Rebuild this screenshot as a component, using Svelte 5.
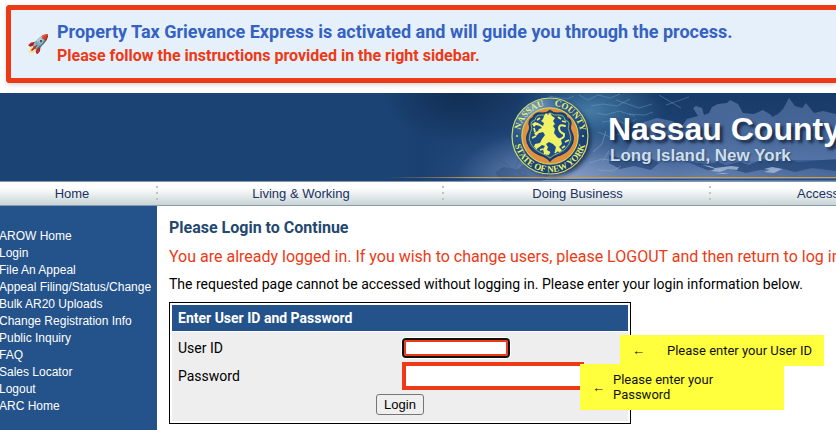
<script>
  const navItems = ['Home', 'Living & Working', 'Doing Business', 'Access'];

  const menu = [
    'AROW Home',
    'Login',
    'File An Appeal',
    'Appeal Filing/Status/Change',
    'Bulk AR20 Uploads',
    'Change Registration Info',
    'Public Inquiry',
    'FAQ',
    'Sales Locator',
    'Logout',
    'ARC Home',
  ];

  let userId = $state('');
  let password = $state('');
</script>

<div class="page">
  <div class="notice">
    <span class="rocket">🚀</span>
    <div>
      <p class="notice-title">Property Tax Grievance Express is activated and will guide you through the process.</p>
      <p class="notice-sub">Please follow the instructions provided in the right sidebar.</p>
    </div>
  </div>

  <header class="banner">
    <svg class="art" viewBox="0 0 460 88" preserveAspectRatio="xMinYMin slice" aria-hidden="true">
      <defs>
        <linearGradient id="sky" x1="0" x2="0" y1="0" y2="1">
          <stop offset="0" stop-color="#183a67" />
          <stop offset="0.45" stop-color="#1d4273" />
          <stop offset="0.8" stop-color="#3d6096" />
          <stop offset="1" stop-color="#50709f" />
        </linearGradient>
        <linearGradient id="fade" x1="0" x2="1" y1="0" y2="0">
          <stop offset="0" stop-color="#1b4474" />
          <stop offset="0.1" stop-color="#1a4071" />
          <stop offset="0.3" stop-color="#1c4274" stop-opacity="0.5" />
          <stop offset="0.4" stop-color="#1c4274" stop-opacity="0" />
        </linearGradient>
        <radialGradient id="haze" cx="0.5" cy="0.5" r="0.5">
          <stop offset="0" stop-color="#9aaed2" stop-opacity="0.8" />
          <stop offset="1" stop-color="#7c99c3" stop-opacity="0" />
        </radialGradient>
        <radialGradient id="sea" cx="0.5" cy="0.5" r="0.5">
          <stop offset="0" stop-color="#4a82ac" stop-opacity="0.9" />
          <stop offset="1" stop-color="#3f77a4" stop-opacity="0" />
        </radialGradient>
        <radialGradient id="shade" cx="0.5" cy="0.5" r="0.5">
          <stop offset="0" stop-color="#102a4c" stop-opacity="0.85" />
          <stop offset="1" stop-color="#102a4c" stop-opacity="0" />
        </radialGradient>
        <linearGradient id="gold" x1="0" x2="1" y1="0" y2="0">
          <stop offset="0" stop-color="#c9994b" stop-opacity="0" />
          <stop offset="0.2" stop-color="#c9994b" />
          <stop offset="1" stop-color="#d69c42" />
        </linearGradient>
        <filter id="soft"><feGaussianBlur stdDeviation="2" /></filter>
      </defs>
      <rect width="460" height="88" fill="url(#sky)" />
      <rect width="460" height="88" fill="url(#fade)" />
      <ellipse cx="84" cy="0" rx="76" ry="50" fill="url(#shade)" />
      <ellipse cx="215" cy="18" rx="75" ry="42" fill="url(#sea)" />
      <ellipse cx="190" cy="84" rx="110" ry="50" fill="url(#haze)" />
      <ellipse cx="330" cy="84" rx="140" ry="36" fill="url(#haze)" opacity="0.4" />
      <g fill="#6583b4" opacity="0.6">
        <path d="M246 66l8-14 5-14 9-9 13-4 15 3 10 5 5-7 11-3-5-8 3-2 6 2 2 7 5-2 3-6 6-3 9-1 3-3 8 4 5 9 11 1 9-4 8 5 9 14-4 10 6 18 6 5z" />
        <path d="M402 21l5-5 6-11 6 8 7 2 4-5 8 10 9-2 13 3v46h-56l-8-6 2-20-8-9 6-8z" opacity="0.9" />
        <path d="M360 36l20-6 18 4 10 14 52-5v24H364z" opacity="0.7" />
      </g>
      <g fill="#1d3f6e" opacity="0.6">
        <path d="M302 65l12 4 17 2 11-2 8 3 14-3 9 3 14-6 12 2 10-3 13 4 38-3v12l-24-3-17 4-11-3-24 1-14 3-16-4-23 1z" />
        <path d="M233 62l11 3 12-1 8 4 10-3 9 5-8 7-17-4-14 3-11-6z" />
        <path d="M119 80l8-6 15 2 7-6 9 4 10-1 6 9-8 6h-40z" opacity="0.5" />
      </g>
      <path d="M326 72l8 1 5 2 16-2 8 1-2 3-9-1-8 3-9-1 4-2zM388 76l8-2 11 2-3 1-6 3-10-1 6-2zM338 80l16 0-7 1z" fill="#a9bbd9" opacity="0.8" />
      <g fill="none" stroke="#91aacb" stroke-width="0.8" opacity="0.6">
        <path d="M213 70l13-4 14 2 10-5M222 77l15 1 8-5M217 59l9-8 4-13M226 69l7-11" />
      </g>
      <g fill="none" stroke="#79a9c8" stroke-width="0.6" opacity="0.65">
        <path d="M203 2l9 5 10-5 12 3 10-4M215 13l12-2 14 2 13-7M221 20l9 2 13-4 16 5M226 29l15-2 10 5 9-6M222 39l12 5 17-5M240 7l23 8 13-4M253 21l16 1 8-3M173 3l18 3 7-3M283 2l22 13M290 12l23-8" />
      </g>
      <g fill="none" stroke="#3d5f92" stroke-width="1" opacity="0.7">
        <path d="M120 66l9 4 6 6M135 60l8 8-4 7M143 80q5-6 7 0t-7 0M154 68l10 3 9 9" />
      </g>
      <rect x="10" y="84" width="450" height="1" fill="url(#gold)" />
      <rect x="40" y="86" width="420" height="1" fill="#1c426f" opacity="0.8" />
      <circle cx="178" cy="46" r="37" fill="#0b203c" opacity="0.75" filter="url(#soft)" />
    </svg>

    <div class="brand">
      <svg class="seal" viewBox="0 0 80 80" role="img" aria-label="Nassau County seal">
        <defs>
          <path id="arc-top" d="M9.5 40a30.5 30.5 0 0 1 61 0" />
          <path id="arc-bottom" d="M3.8 40a36.2 36.2 0 0 0 72.4 0" />
          <radialGradient id="disc" cx="0.3" cy="0.15" r="0.75">
            <stop offset="0" stop-color="#7fa3c4" />
            <stop offset="0.5" stop-color="#2d5b8e" />
            <stop offset="1" stop-color="#1a4077" />
          </radialGradient>
        </defs>
        <circle cx="40" cy="40" r="38" fill="url(#disc)" stroke="#cfdc6c" stroke-width="1.2" />
        <circle cx="40" cy="40" r="28.2" fill="#e0913f" stroke="#d7e267" stroke-width="1" />
        <path d="M40 14.500Q44 18 50 17Q56 17 57 22Q61 23 61 28Q59 32 62 37Q65 43 61 50Q58 56 50 59Q43 61 40 65Q37 61 30 59Q22 56 19 50Q15 43 18 37Q21 32 19 28Q19 23 23 22Q24 17 30 17Q36 18 40 14.500z" fill="#1e4d85" stroke="#163a68" stroke-width="1.4" />
        <path d="M40 17Q44 20 49 19Q54 19 55 24Q59 25 59 28Q57 32 60 38Q62 43 59 48Q56 54 49 57Q43 59 40 62Q37 59 31 57Q24 54 21 48Q18 43 20 38Q23 32 21 28Q21 25 25 24Q26 19 31 19Q36 20 40 17z" fill="none" stroke="#b4c46b" stroke-width="0.8" />
        <path d="M34 20l2-3 2 2 2-2 2 3 3 2-2 3 2 3-2 2 2 3-1 4 3 4 4 3 1 4-3 3 3 3-2 2-5-1 1-4-3-3-4-2-3 2 2 3-1 3 3 2-1 3-5-1-1-5 2-3-3-1-4 3-4-1 1-3 5-1 2-4 3-4-2-3-4 1-3 3-2-3 4-2 1-2 3-1-2-2-4-1-2 2-2-3 3-2 3 1 5 3 1-3-3-2 2-2z" fill="#f0f266" />
        <path d="M46 44Q55 43 54 38Q49 36 49 32Q49 28 55 30" fill="none" stroke="#f0f266" stroke-width="2" stroke-linecap="round" />
        <g stroke="#e6ec6b" stroke-width="1.8">
          <path d="M27 24l3-2M48 21l3 2M24 32l1 4M52 25l4 1M22 42l4-2M55 46l4-2M25 50l2 3M52 52l3-2M36 58l4-2M30 54l3-1M45 57l2-3" />
        </g>
        <g class="seal-text">
          <text><textPath href="#arc-top" startOffset="6">NASSAU</textPath></text>
          <text><textPath href="#arc-top" startOffset="52">COUNTY</textPath></text>
          <text text-anchor="middle"><textPath href="#arc-bottom" startOffset="50%">STATE OF NEW YORK</textPath></text>
        </g>
        <circle cx="7" cy="40" r="1" fill="#e1e96b" />
        <circle cx="73" cy="40" r="1" fill="#e1e96b" />
      </svg>
      <div class="brand-text">
        <span class="brand-name">Nassau County</span>
        <span class="brand-place">Long Island, New York</span>
      </div>
    </div>
  </header>

  <nav class="topnav">
    {#each navItems as item}
      <a href="#top">{item}</a>
    {/each}
  </nav>

  <div class="columns">
    <aside class="sidebar">
      {#each menu as item}
        <a href="#menu">{item}</a>
      {/each}
    </aside>

    <main>
      <h1>Please Login to Continue</h1>
      <p class="warning">You are already logged in. If you wish to change users, please LOGOUT and then return to log in</p>
      <p class="info">The requested page cannot be accessed without logging in. Please enter your login information below.</p>

      <form class="login" onsubmit={(e) => e.preventDefault()}>
        <h2>Enter User ID and Password</h2>
        <div class="fields">
          <div class="field">
            <label for="user">User ID</label>
            <input id="user" class="user" type="text" bind:value={userId} />
            <div class="tip tip-user"><span class="arrow">←</span><span>Please enter your User ID</span></div>
          </div>
          <div class="field">
            <label for="password">Password</label>
            <input id="password" class="password" type="password" bind:value={password} />
            <div class="tip tip-password"><span class="arrow">←</span><span>Please enter your Password</span></div>
          </div>
          <button type="submit">Login</button>
        </div>
      </form>
    </main>
  </div>
</div>

<style>
  :global(body) { background: #fff; }
  .page {
    min-height: 100vh;
    display: flex;
    flex-direction: column;
    overflow: hidden;
    font-family: Roboto, sans-serif;
    color: #000;
  }
  p, h1, h2 { margin: 0; }
  a { text-decoration: none; }

  .notice {
    display: flex;
    align-items: center;
    gap: 8px;
    margin: 5px 0 10px 6px;
    padding: 10px 16px;
    border: 5px solid #ed3915;
    border-right: 0;
    border-radius: 4px 0 0 4px;
    background: #e6f0fb;
    box-shadow: 0 2px 4px rgba(0, 0, 0, 0.15);
    font-weight: 700;
    white-space: nowrap;
  }
  .rocket { width: 22px; font-size: 18px; line-height: 22px; }
  .notice-title { font-size: 18px; line-height: 24px; color: #3462c2; }
  .notice-sub { font-size: 16px; line-height: 24px; color: #ed3915; }

  .banner {
    position: relative;
    height: 88px;
    background: #1b4474;
    overflow: hidden;
  }
  .art {
    position: absolute;
    top: 0;
    left: 376px;
    width: calc(100% - 376px);
    height: 88px;
  }
  .brand {
    position: relative;
    display: flex;
    gap: 18px;
    margin-left: 510px;
    padding-top: 3px;
  }
  .seal { width: 80px; height: 80px; flex: none; }
  .seal-text { font: bold 9px "Liberation Serif", serif; fill: #eaf06c; }
  .brand-text {
    display: flex;
    flex-direction: column;
    padding-top: 16px;
    font-family: "Liberation Sans", Arial, sans-serif;
    font-weight: bold;
    white-space: nowrap;
  }
  .brand-name { font-size: 32px; line-height: 34px; color: #fff; text-shadow: 3px 3px 3px rgba(12, 30, 58, 0.8); }
  .brand-place { padding-left: 2px; font-size: 17px; line-height: 20px; color: #cddfeb; text-shadow: 1px 1px 2px rgba(12, 30, 58, 0.5); }

  .topnav {
    display: grid;
    grid-template-columns: 158px 286px 267px 1fr;
    border-top: 1px solid #8497ac;
    border-bottom: 1px solid #8a99ab;
    background: linear-gradient(#fff 25%, #c8d4d5);
  }
  .topnav a {
    position: relative;
    font: 13px/23px "Liberation Sans", Arial, sans-serif;
    text-align: center;
    color: #1c3164;
  }
  .topnav a:first-child { padding-right: 14px; }
  .topnav a:last-child { padding-left: 86px; text-align: left; }
  .topnav a:not(:last-child)::after {
    content: '';
    position: absolute;
    top: 4px;
    right: 0;
    width: 2px;
    height: 14px;
    background: repeating-linear-gradient(#b9c8b9 0 2px, transparent 2px 6px);
  }

  .columns { display: flex; flex: 1; }
  .sidebar {
    display: flex;
    flex-direction: column;
    flex: none;
    width: 157px;
    padding-top: 22px;
    box-sizing: border-box;
    background: #24528a;
  }
  .sidebar a {
    margin-left: -1px;
    font: 12px/17px "Liberation Sans", Arial, sans-serif;
    color: #fff;
    white-space: nowrap;
  }

  main { flex: 1; min-width: 0; padding: 12px 0 6px 12px; white-space: nowrap; }
  h1 { font-size: 16px; line-height: 20px; color: #24486f; }
  .warning { margin-top: 8px; font-size: 16px; line-height: 22px; color: #ed3915; }
  .info { margin-top: 6px; font-size: 14px; line-height: 20px; }

  .login {
    max-width: 456px;
    margin-top: 8px;
    padding: 2px;
    border: 1px solid #000;
  }
  h2 {
    padding: 0 6px;
    background: #24528a;
    font-size: 14px;
    line-height: 26px;
    color: #fff;
  }
  .fields {
    display: flex;
    flex-direction: column;
    gap: 4px;
    margin-top: 1px;
    padding: 6px;
    background: #eee;
    font-size: 14px;
  }
  .field { position: relative; display: grid; grid-template-columns: 224px 1fr; align-items: center; }
  input {
    box-sizing: border-box;
    border: 4px solid #ed3915;
    background: #fff;
    border-radius: 0;
    outline: none;
    font: 13px Roboto, sans-serif;
  }
  .user {
    width: 104px;
    height: 16px;
    margin: 2px;
    padding: 0;
    border-width: 2px;
    outline: 2px solid #101010;
    border-radius: 2px;
    box-shadow: 0 0 0 3px #fff;
  }
  .password { width: 182px; height: 28px; }
  button {
    align-self: center;
    height: 21px;
    padding: 0 7px;
    border: 1px solid #767676;
    border-radius: 3px;
    background: #efefef;
    color: #000;
    font: 13px "Liberation Sans", Arial, sans-serif;
  }

  .tip {
    position: absolute;
    z-index: 1;
    display: flex;
    align-items: center;
    width: 204px;
    box-sizing: border-box;
    padding: 8px 12px;
    background: #ffff3d;
    font-size: 13px;
    line-height: 15px;
    color: #111;
  }
  .arrow { flex: none; }
  .tip-user { top: -3px; left: 442px; justify-content: space-between; }
  .tip-password { top: 2px; left: 402px; z-index: 2; gap: 8px; padding-right: 56px; white-space: normal; }
</style>
